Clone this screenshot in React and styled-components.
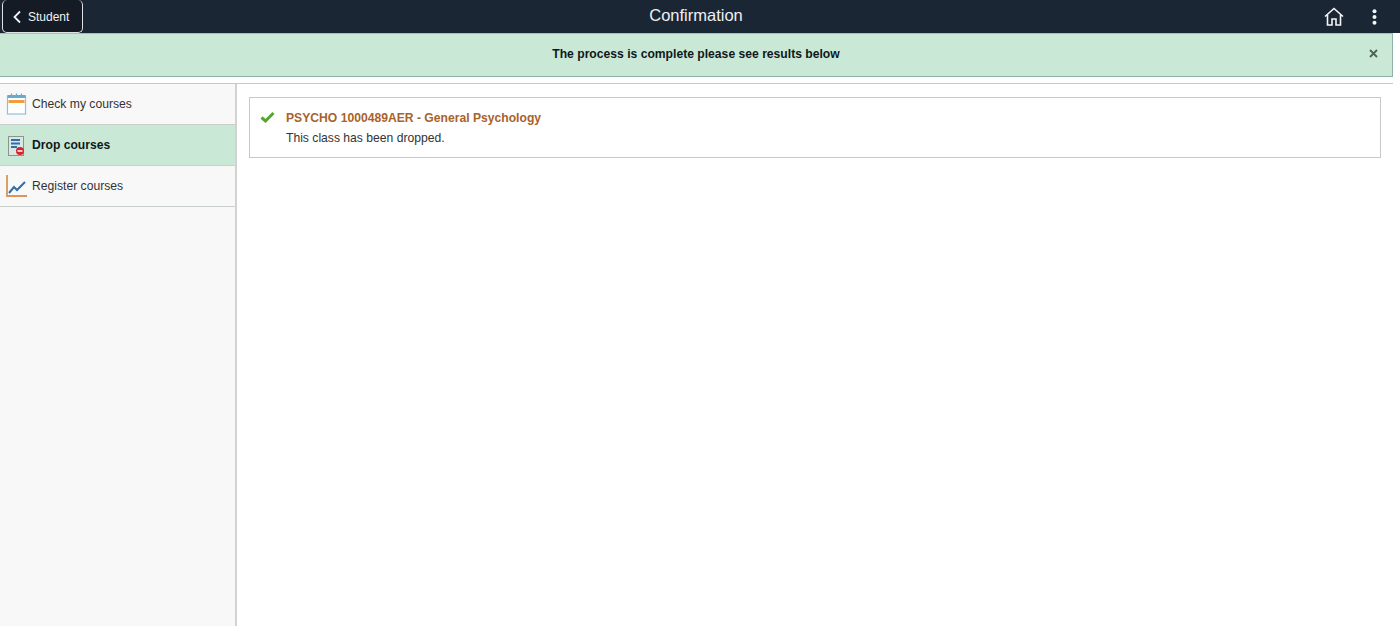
import { createGlobalStyle } from 'styled-components';
import styled from 'styled-components';

const GlobalStyle = createGlobalStyle`
    html, body {
        margin: 0;
        padding: 0;
        height: 100%;
        background: #fff;
        font-family: "Liberation Sans", Arial, sans-serif;
    }
    #root {
        height: 100%;
    }
`;

const Page = styled.div`
    width: 1400px;
    height: 626px;
    display: flex;
    flex-direction: column;
    overflow: hidden;
    background: #fff;
`;

const Banner = styled.header`
    height: 33px;
    flex: none;
    padding-right: 8px;
    display: grid;
    grid-template-columns: 1fr auto 1fr;
    align-items: center;
    background: #1b2635;
`;

const BackButton = styled.button`
    justify-self: start;
    width: 81px;
    height: 33px;
    margin-left: 2px;
    padding: 1px 0 0 9px;
    display: flex;
    align-items: center;
    gap: 6px;
    border: 1px solid #dfe3e6;
    border-top: none;
    border-radius: 5px;
    background: #141b25;
    color: #f0f2f4;
    font: 12px "Liberation Sans", Arial, sans-serif;
`;

const Title = styled.h1`
    margin: 0 0 2px;
    color: #eef0f3;
    font-size: 16.5px;
    font-weight: 400;
`;

const BannerIcons = styled.div`
    justify-self: end;
    margin-right: 15px;
    display: flex;
    align-items: center;
    gap: 28px;
`;

const Message = styled.div`
    height: 44px;
    width: 1393px;
    flex: none;
    box-sizing: border-box;
    padding: 0 14px 2px;
    display: grid;
    grid-template-columns: 1fr auto 1fr;
    align-items: center;
    border: 1px solid #8fb3a6;
    border-top: 1px solid #9cc4b0;
    border-left: none;
    background: #c9e8d6;
`;

const MessageText = styled.div`
    color: #10181c;
    font-size: 12.15px;
    font-weight: 700;
`;

const CloseButton = styled.span`
    justify-self: end;
    margin-top: -2px;
    display: flex;
`;

const Content = styled.div`
    flex: 1;
    display: flex;
    margin-top: 6px;
    width: 1393px;
    border-top: 1px solid #c8c8c8;
`;

const Sidebar = styled.nav`
    width: 235px;
    flex: none;
    background: #f8f8f8;
    border-right: 2px solid #d2d2d2;
`;

const NavItem = styled.div`
    height: 40px;
    padding-left: 6px;
    display: flex;
    align-items: center;
    gap: 5px;
    border-bottom: 1px solid #c9cfcc;
    background: ${props => (props.$active ? '#c9e8d6' : 'transparent')};
    color: ${props => (props.$active ? '#10181c' : '#333')};
    font-size: 12.15px;
    font-weight: ${props => (props.$active ? 700 : 400)};
`;

const NavLabel = styled.span`
    margin-top: -1px;
`;

const NavIcon = styled.svg`
    width: 21px;
    height: 24px;
    flex: none;
    margin-top: -1px;
`;

const Main = styled.main`
    flex: 1;
    padding: 13px 12px 0 12px;
`;

const ResultCard = styled.section`
    height: 61px;
    box-sizing: border-box;
    padding: 13px 0 0 10px;
    display: flex;
    gap: 11px;
    border: 1px solid #c8c8c8;
`;

const CheckIcon = styled.svg`
    width: 15px;
    height: 12px;
    flex: none;
`;

const CourseName = styled.div`
    color: #a8622a;
    font-size: 12.15px;
    font-weight: 700;
    line-height: 15px;
`;

const Status = styled.div`
    margin-top: 5px;
    color: #333;
    font-size: 12.15px;
    line-height: 15px;
`;

function App() {
    return (
        <>
            <GlobalStyle />
            <Page>
                <Banner>
                    <BackButton>
                        <svg width="10" height="14" viewBox="0 0 10 14">
                            <path d="M8 1.5 2.500 7 8 12.500" fill="none" stroke="#f0f2f4" strokeWidth="1.800" />
                        </svg>
                        Student
                    </BackButton>
                    <Title>Confirmation</Title>
                    <BannerIcons>
                        <svg width="20" height="19" viewBox="0 0 20 19">
                            <path d="M1 9.500 10 1.500l9 8M3.500 8v10h4.500v-6h4v6h4.500V8" fill="none" stroke="#f4f5f6" strokeWidth="1.600" />
                        </svg>
                        <svg width="5" height="16" viewBox="0 0 5 16">
                            <circle cx="2.500" cy="2.300" r="2" fill="#f4f5f6" />
                            <circle cx="2.500" cy="8" r="2" fill="#f4f5f6" />
                            <circle cx="2.500" cy="13.700" r="2" fill="#f4f5f6" />
                        </svg>
                    </BannerIcons>
                </Banner>
                <Message>
                    <span />
                    <MessageText>The process is complete please see results below</MessageText>
                    <CloseButton>
                        <svg width="9" height="9" viewBox="0 0 9 9">
                            <path d="M1 1 8 8M8 1 1 8" stroke="#4f6159" strokeWidth="1.800" />
                        </svg>
                    </CloseButton>
                </Message>
                <Content>
                    <Sidebar>
                        <NavItem>
                            <NavIcon viewBox="0 0 21 24">
                                <rect x="1.500" y="4" width="18" height="18" fill="#fff" stroke="#8fbfdc" strokeWidth="1.200" />
                                <rect x="1.500" y="3" width="18" height="3" fill="#6aa8d0" />
                                <rect x="2.500" y="8" width="16" height="3" fill="#ef9d3f" />
                                <path d="M5.500 1.500v3M10.500 1.500v3M15.500 1.500v3" stroke="#6aa8d0" strokeWidth="1.200" />
                            </NavIcon>
                            <NavLabel>Check my courses</NavLabel>
                        </NavItem>
                        <NavItem $active>
                            <NavIcon viewBox="0 0 21 24">
                                <rect x="2.500" y="3.500" width="15" height="19" fill="#dbe8e2" stroke="#8a9590" />
                                <path d="M5 7h9M5 10.500h9M5 14h6" stroke="#2f6fa8" strokeWidth="2" />
                                <circle cx="14" cy="18" r="4" fill="#d8232f" />
                                <path d="M11.500 18h5" stroke="#fff" strokeWidth="1.500" />
                            </NavIcon>
                            <NavLabel>Drop courses</NavLabel>
                        </NavItem>
                        <NavItem>
                            <NavIcon viewBox="0 0 21 24">
                                <path d="M1 1v21h20" fill="none" stroke="#d9955a" strokeWidth="1.800" />
                                <path d="M3 19 8 13l3 3 8-8" fill="none" stroke="#2c6ea8" strokeWidth="2" />
                            </NavIcon>
                            <NavLabel>Register courses</NavLabel>
                        </NavItem>
                    </Sidebar>
                    <Main>
                        <ResultCard>
                            <CheckIcon viewBox="0 0 15 12">
                                <path d="M1.500 6.500 5.500 10 13.500 2" fill="none" stroke="#55a630" strokeWidth="3" />
                            </CheckIcon>
                            <div>
                                <CourseName>PSYCHO 1000489AER - General Psychology</CourseName>
                                <Status>This class has been dropped.</Status>
                            </div>
                        </ResultCard>
                    </Main>
                </Content>
            </Page>
        </>
    );
}

export default App;
